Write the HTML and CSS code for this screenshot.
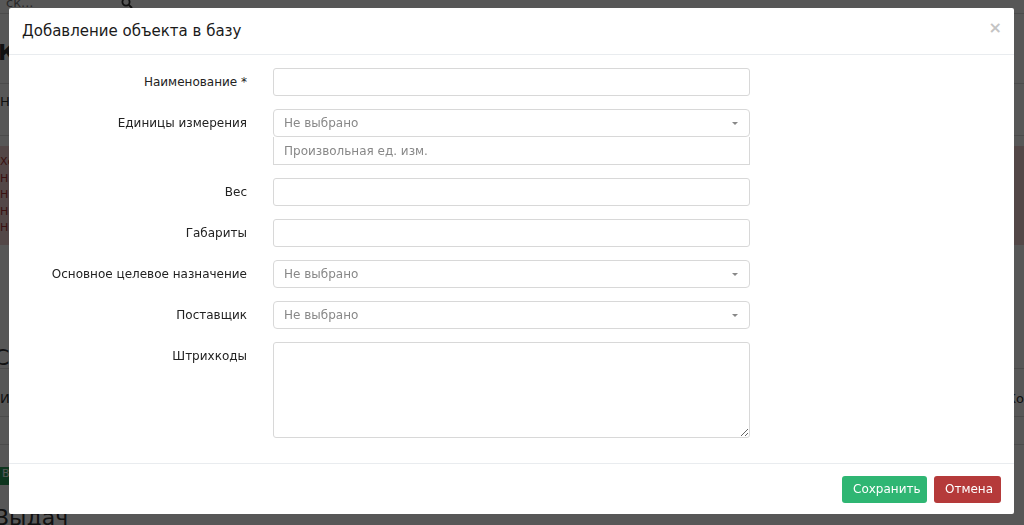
FILE: index.html
```html
<!DOCTYPE html>
<html lang="ru">
<head>
<meta charset="utf-8">
<title>Добавление объекта в базу</title>
<link rel="stylesheet" href="styles.css">
</head>
<body>
<div class="page">
  <div class="topbar">
    <span class="search-text">ск...</span>
    <svg class="search-icon" width="12" height="12" viewBox="0 0 12 12"><circle cx="5" cy="5" r="3.6" fill="none" stroke="#333" stroke-width="1.8"/><path d="M7.6 7.6 L11 11" stroke="#333" stroke-width="2"/></svg>
  </div>
  <h1 class="page-title">К</h1>
  <div class="tabs">Н</div>
  <div class="alert">
    <div>Хо</div>
    <div>Н</div>
    <div>Н</div>
    <div>Н</div>
    <div>Н</div>
  </div>
  <h2 class="section-title">Се</h2>
  <div class="row-line"><span>Инк</span><span>Ко</span></div>
  <div class="row-line short"><span class="orange">I</span><span></span></div>
  <div class="green-tag">Выдав</div>
  <h2 class="section-title low">Выдач</h2>
</div>

<div class="overlay">
  <div class="modal">
    <div class="modal-header">
      <h3 class="modal-title">Добавление объекта в базу</h3>
      <span class="close">×</span>
    </div>
    <div class="modal-body">
      <div class="form-row">
        <label class="label">Наименование *</label>
        <div class="control"><input class="input" type="text"></div>
      </div>
      <div class="form-row">
        <label class="label">Единицы измерения</label>
        <div class="control">
          <div class="select"><span>Не выбрано</span><i class="caret"></i></div>
          <input class="input joined" type="text" placeholder="Произвольная ед. изм.">
        </div>
      </div>
      <div class="form-row">
        <label class="label">Вес</label>
        <div class="control"><input class="input" type="text"></div>
      </div>
      <div class="form-row">
        <label class="label">Габариты</label>
        <div class="control"><input class="input" type="text"></div>
      </div>
      <div class="form-row">
        <label class="label">Основное целевое назначение</label>
        <div class="control"><div class="select"><span>Не выбрано</span><i class="caret"></i></div></div>
      </div>
      <div class="form-row">
        <label class="label">Поставщик</label>
        <div class="control"><div class="select"><span>Не выбрано</span><i class="caret"></i></div></div>
      </div>
      <div class="form-row">
        <label class="label">Штрихкоды</label>
        <div class="control"><textarea class="textarea"></textarea></div>
      </div>
    </div>
    <div class="modal-footer">
      <button class="btn btn-save">Сохранить</button>
      <button class="btn btn-cancel">Отмена</button>
    </div>
  </div>
</div>
</body>
</html>
```
FILE: styles.css
```css
* { box-sizing: border-box; }
html, body { margin: 0; padding: 0; }
body {
  width: 1024px;
  height: 525px;
  overflow: hidden;
  font-family: "DejaVu Sans", "Noto Sans", sans-serif;
  color: #333;
  background: #fff;
}

/* background page */
.page {
  width: 1024px;
  height: 525px;
  font-size: 13px;
  color: #333;
}
.topbar {
  display: flex;
  align-items: center;
  gap: 88px;
  height: 22px;
  border-bottom: 1px solid #ddd;
  padding: 0 6px;
  margin-top: -8px;
}
.search-text { color: #777; }
.page-title {
  font-size: 22px;
  font-weight: 600;
  margin: 26px 0 0 -2px;
  height: 44px;
  border-bottom: 1px solid #ddd;
}
.tabs {
  height: 52px;
  padding: 10px 0 0 0;
  border-bottom: 1px solid #ddd;
}
.alert {
  margin-top: 10px;
  background: #f2cfcf;
  color: #a33;
  height: 99px;
  padding: 8px 0 0 0;
  font-size: 11px;
  line-height: 16.5px;
}
.section-title {
  font-size: 22px;
  font-weight: 500;
  margin: 100px 0 0 -6px;
  height: 24px;
  border-bottom: 1px solid #ddd;
}
.section-title.low { margin-top: 20px; border: 0; }
.row-line {
  display: flex;
  justify-content: space-between;
  height: 48px;
  padding-top: 22px;
  border-bottom: 1px solid #ddd;
}
.row-line.short { height: 28px; padding-top: 6px; }
.orange { color: #e08a2a; padding-left: 22px; }
.green-tag {
  margin-top: 22px;
  width: 60px;
  height: 18px;
  background: #2a9d5a;
  color: #fff;
  font-size: 11px;
  padding-left: 2px;
}

/* overlay + modal */
.overlay {
  position: fixed;
  inset: 0;
  background: rgba(0, 0, 0, 0.66);
}
.modal {
  position: absolute;
  left: 9px;
  top: 8px;
  width: 1005px;
  height: 506px;
  background: #fff;
  border-radius: 2px;
  display: flex;
  flex-direction: column;
}
.modal-header {
  height: 47px;
  border-bottom: 1px solid #e9ecef;
  display: flex;
  align-items: center;
  justify-content: space-between;
  padding: 0 12px 0 13px;
}
.modal-title {
  margin: 0;
  font-size: 15px;
  font-weight: 400;
  color: #1a1a1a;
}
.close {
  font-size: 16px;
  font-weight: 700;
  color: #c4c4c4;
  line-height: 1;
  margin-top: -6px;
}
.modal-body {
  flex: 1;
  padding: 13px 0 0 0;
  display: flex;
  flex-direction: column;
  gap: 13px;
}
.form-row {
  display: flex;
  align-items: flex-start;
  gap: 26px;
}
.label {
  width: 238px;
  text-align: right;
  font-size: 12px;
  font-weight: 500;
  color: #222;
  padding-top: 7px;
  line-height: 14px;
}
.control {
  width: 477px;
  display: flex;
  flex-direction: column;
}
.input, .select, .textarea {
  width: 100%;
  height: 28px;
  border: 1px solid #d8d8d8;
  border-radius: 3px;
  background: #fff;
  font-family: inherit;
  font-size: 12px;
  padding: 0 10px;
  margin: 0;
  outline: none;
}
.input::placeholder { color: #888; }
.select {
  display: flex;
  align-items: center;
  justify-content: space-between;
  color: #888;
  border-radius: 4px;
}
.caret {
  width: 0;
  height: 0;
  border-left: 3.5px solid transparent;
  border-right: 3.5px solid transparent;
  border-top: 3.5px solid #888;
  margin-right: 1px;
}
.joined { border-radius: 0; border-top: 0; }
.textarea {
  height: 96px;
  resize: vertical;
  padding: 6px 10px;
}
.modal-footer {
  height: 51px;
  border-top: 1px solid #e9ecef;
  display: flex;
  justify-content: flex-end;
  align-items: center;
  gap: 7px;
  padding: 0 13px 0 0;
}
.btn {
  height: 27px;
  border: 0;
  border-radius: 3px;
  color: #fff;
  font-family: inherit;
  font-size: 12px;
  padding: 0 11px;
  cursor: pointer;
}
.btn-save { background: #2fb673; width: 85px; }
.btn-cancel { background: #b53a3a; width: 67px; }
```
